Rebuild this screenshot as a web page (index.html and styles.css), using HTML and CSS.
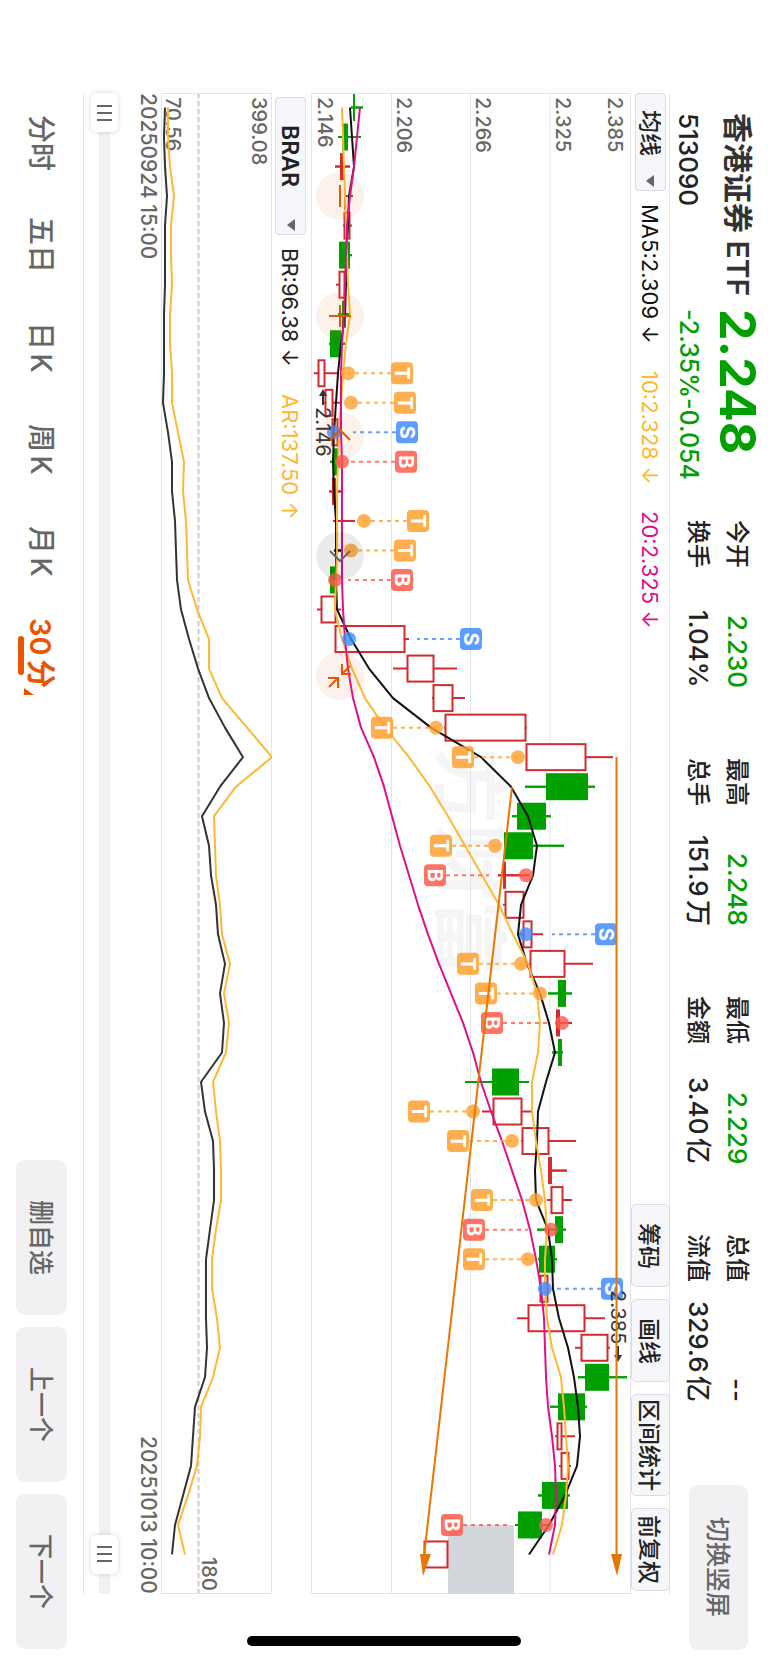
FILE: index.html
```html
<!DOCTYPE html>
<html lang="zh-CN">
<head>
    <meta charset="UTF-8">
    <meta name="viewport" content="width=device-width, initial-scale=1.0">
    <title>香港证券ETF 513090</title>
    <link rel="stylesheet" href="styles.css">
</head>
<body>
    <div class="app">
        <!-- Quote header -->
        <header class="header">
            <div class="quote">
                <h1 class="name">香港证券 ETF</h1>
                <strong class="price">2.248</strong>
                <span class="code">513090</span>
                <span class="change">-2.35%<span>-0.054</span></span>
            </div>
            <dl class="stats">
                <div><dt>今开</dt><dd class="down">2.230</dd></div>
                <div><dt>最高</dt><dd class="down">2.248</dd></div>
                <div><dt>最低</dt><dd class="down">2.229</dd></div>
                <div><dt>总值</dt><dd>--</dd></div>
                <div><dt>换手</dt><dd>1.04%</dd></div>
                <div><dt>总手</dt><dd>151.9万</dd></div>
                <div><dt>金额</dt><dd>3.40亿</dd></div>
                <div><dt>流值</dt><dd>329.6亿</dd></div>
            </dl>
            <button class="soft-btn rotate-btn">切换竖屏</button>
        </header>

        <main class="panel">
            <div class="toolbar">
                <div class="picker">
                    <select aria-label="主图指标"><option>均线</option></select>
                    <svg class="caret" viewBox="0 0 10 12"><path d="M9 0v12L1 6z"/></svg>
                </div>
                <span class="legend ma5">MA5:2.309 ↓</span>
                <span class="legend ma10">10:2.328 ↓</span>
                <span class="legend ma20">20:2.325 ↓</span>
                <div class="tools">
                    <button>筹码</button>
                    <button>画线</button>
                    <button>区间统计</button>
                    <button>前复权</button>
                </div>
            </div>

            <!-- Candles -->
            <div class="main-chart">
                <svg id="kline" viewBox="311 93 320 1501"></svg>
                <div class="float-tools">
                    <button aria-label="缩小"><svg viewBox="0 0 48 48"><path d="M24 13v22"/></svg></button>
                    <button aria-label="放大"><svg viewBox="0 0 48 48"><path d="M24 13v22M13 24h22"/></svg></button>
                    <button aria-label="左移"><svg viewBox="0 0 48 48"><path d="M14 28l10-10 10 10"/></svg></button>
                    <button aria-label="右移" class="muted"><svg viewBox="0 0 48 48"><path d="M14 19l10 10 10-10"/></svg></button>
                    <button aria-label="收起"><svg viewBox="0 0 48 48"><path d="M34 14l-8 8M26 12v10h9M13 35l9-9M12 26h10v10"/></svg></button>
                </div>
            </div>

            <div class="toolbar sub">
                <div class="picker wide">
                    <select aria-label="副图指标"><option>BRAR</option></select>
                    <svg class="caret" viewBox="0 0 10 12"><path d="M9 0v12L1 6z"/></svg>
                </div>
                <span class="legend br">BR:96.38 ↓</span>
                <span class="legend ma10">AR:137.50 ↑</span>
            </div>

            <div class="sub-chart">
                <svg id="brar" viewBox="161 93 111 1501"></svg>
            </div>

            <div class="dates">
                <time>20250924 15:00</time>
                <time>20251013 10:00</time>
            </div>

            <div class="range">
                <input type="range" aria-label="开始时间" min="0" max="500" value="0">
                <input type="range" aria-label="结束时间" min="0" max="500" value="493">
            </div>
        </main>

        <footer class="footer">
            <nav class="periods">
                <a href="#">分时</a>
                <a href="#">五日</a>
                <a href="#">日K</a>
                <a href="#">周K</a>
                <a href="#">月K</a>
                <a href="#" class="active">30分<svg viewBox="0 0 10 7"><path d="M0 0l10 7H0z"/></svg></a>
            </nav>
            <div class="actions">
                <button class="soft-btn">删自选</button>
                <button class="soft-btn">上一个</button>
                <button class="soft-btn">下一个</button>
            </div>
        </footer>

        <div class="home-bar"></div>
    </div>

    <script>
        const START = 107.5;
        const STEP = 29.53;
        const pos = i => START + i * STEP;

        // kind, body from, body to, low, high
        const candles = [
            ['g', 353, 355, 351, 363], ['g', 342, 348, 338, 361], ['r', 340, 344, 335, 350],
            ['r', 344, 345, 344, 353], ['h', 344, 350, 343, 352], ['g', 339, 350, 339, 352],
            ['h', 339, 345, 336, 345], ['g', 342, 346, 338, 349], ['g', 330, 341, 329, 345],
            ['h', 318, 325, 314, 339], ['h', 325, 333, 324, 340], ['h', 332, 338, 331, 340],
            ['g', 334, 338, 330, 340], ['r', 332, 336, 329, 341], ['r', 336, 337, 333, 355],
            ['k', 336, 337, 334, 342], ['g', 330, 335, 329, 337], ['h', 321, 336, 317, 341],
            ['h', 335, 405, 335, 409], ['h', 407, 434, 393, 457], ['h', 433, 453, 432, 465],
            ['h', 445, 526, 444, 527], ['h', 526, 586, 526, 613], ['g', 546, 588, 525, 595],
            ['g', 517, 546, 512, 551], ['g', 504, 533, 504, 564], ['r', 503, 506, 498, 530],
            ['h', 505, 524, 503, 524], ['h', 523, 532, 518, 543], ['h', 530, 565, 529, 593],
            ['g', 558, 566, 548, 572], ['r', 556, 560, 555, 572], ['g', 558, 562, 552, 563],
            ['g', 492, 519, 465, 529], ['h', 493, 522, 482, 532], ['h', 522, 549, 521, 576],
            ['r', 548, 552, 548, 567], ['h', 551, 563, 547, 572], ['g', 555, 563, 537, 566],
            ['g', 539, 555, 538, 557], ['h', 540, 548, 539, 549], ['h', 528, 585, 517, 605],
            ['h', 581, 608, 575, 610], ['g', 585, 609, 578, 627], ['g', 558, 585, 550, 587],
            ['h', 557, 562, 555, 575], ['h', 561, 569, 559, 571], ['g', 542, 568, 538, 570],
            ['g', 518, 542, 515, 550], ['h', 424, 448, 424, 448]
        ];

        const ma5 = [350, 352, 354, 349, 348, 346, 346, 345, 341, 338, 336, 334, 333, 334, 336, 336, 336, 337, 351, 369,
            393, 431, 481, 511, 528, 537, 533, 521, 518, 527, 540, 549, 555, 546, 538, 537, 535, 536, 548, 552,
            553, 559, 568, 574, 578, 580, 577, 565, 549, 529];
        const ma10 = [342, 343, 344, 345, 346, 347, 348, 350, 346, 343, 341, 339, 338, 337, 337, 337, 336, 335, 342, 352,
            365, 385, 409, 430, 448, 465, 482, 499, 513, 528, 537, 540, 538, 532, 532, 536, 541, 545, 547, 545,
            545, 547, 552, 561, 564, 566, 568, 566, 562, 553];
        const ma20 = [360, 357, 354, 350, 347, 346, 345, 344, 342, 341, 341, 341, 342, 342, 342, 342, 342, 343, 345, 348,
            353, 361, 374, 384, 392, 400, 409, 418, 428, 439, 451, 463, 473, 481, 491, 502, 512, 522, 530, 536,
            541, 544, 545, 546, 548, 552, 555, 556, 555, 549];

        const br = [165, 164, 165, 167, 165, 165, 165, 164, 164, 164, 163, 168, 172, 172, 175, 176, 177, 181, 189, 198,
            209, 225, 243, 220, 202, 209, 211, 216, 218, 225, 220, 224, 222, 201, 205, 213, 214, 214, 210, 206,
            206, 206, 207, 205, 195, 193, 191, 183, 175, 172];
        const ar = [168, 168, 170, 174, 171, 171, 172, 170, 170, 172, 172, 178, 184, 183, 186, 187, 188, 197, 209, 209,
            222, 247, 272, 236, 214, 215, 216, 220, 222, 230, 224, 229, 226, 213, 216, 220, 221, 221, 216, 212,
            212, 217, 220, 213, 201, 200, 197, 188, 178, 185];

        // index, letter, dot, badge, where the dashes start
        const marks = [
            [9, 'T', 348, 402, 348], [10, 'T', 351, 405, 351], [11, 'S', 334, 407, 353], [12, 'B', 342, 406, 347],
            [14, 'T', 364, 418, 364], [15, 'T', 351, 405, 351], [16, 'B', 335, 402, 348], [18, 'S', 349, 471, 417],
            [21, 'T', 436, 382, 436], [22, 'T', 518, 463, 518], [25, 'T', 495, 441, 495], [26, 'B', 526, 435, 489],
            [28, 'S', 526, 606, 552], [29, 'T', 521, 468, 521], [30, 'T', 540, 486, 540], [31, 'B', 562, 492, 547],
            [34, 'T', 473, 419, 473], [35, 'T', 512, 458, 512], [37, 'T', 536, 482, 536], [38, 'B', 551, 474, 528],
            [39, 'T', 528, 474, 528], [40, 'S', 545, 612, 557], [48, 'B', 546, 452, 507]
        ];

        function line(values, cls) {
            const points = values.map((v, i) => `${v},${pos(i)}`).join(' ');
            return `<polyline class="line ${cls}" points="${points}"/>`;
        }

        function label(x, y, text, cls = 'axis') {
            return `<text class="${cls}" transform="translate(${x} ${y}) rotate(90)">${text}</text>`;
        }

        function candle([kind, from, to, low, high], i) {
            const y = pos(i);
            const body = kind === 'h'
                ? `<rect x="${from + .5}" y="${y - 13}" width="${to - from - 1}" height="26"/>`
                : `<rect x="${from}" y="${y - 13.5}" width="${to - from}" height="27"/>`;
            return `<g class="candle ${kind}"><path d="M${low} ${y}H${from}M${to} ${y}H${high}"/>${body}` +
                (kind === 'h' ? '' : `<path d="M${low} ${y}H${high}"/>`) + '</g>';
        }

        function mark([i, letter, dot, badge, from]) {
            const y = pos(i);
            const end = badge > dot ? badge - 11 : badge + 11;
            return `<g class="mark ${letter}"><path d="M${end} ${y}H${from}"/>` +
                `<circle cx="${dot}" cy="${y}" r="7"/>` +
                `<rect x="${badge - 11}" y="${y - 11}" width="22" height="22" rx="4"/>` +
                label(badge - 7, y, letter, 'letter') + '</g>';
        }

        document.getElementById('kline').innerHTML =
            label(442, 748, '方财富', 'watermark') +
            '<path class="grid" d="M391.5 93V1594M470.5 93V1594M550 93V1594"/>' +
            '<path class="frame" d="M311.5 93.5H630.5V1593.5H311.5z"/>' +
            '<rect class="gap" x="448" y="1525" width="66" height="69"/>' +
            label(318, 97, '2.146') + label(397, 97, '2.206') + label(476, 97, '2.266') +
            label(556, 97, '2.325') + label(608, 97, '2.385') +
            candles.map(candle).join('') +
            line(ma5, 'c5') + line(ma10, 'c10') + line(ma20, 'c20') +
            marks.map(mark).join('') +
            label(316, 407, '2.146', 'extreme') +
            '<path class="pointer" d="M323 405V393"/><path class="tip" d="M319 396l4-7 4 7z"/>' +
            label(611, 1290, '2.385', 'extreme') +
            '<path class="pointer" d="M618 1346V1358"/><path class="tip" d="M614 1355l4 7 4-7z"/>' +
            '<g class="ray"><path d="M616.5 757V1556M512 787L424 1556"/>' +
            '<path class="head" d="M611 1554h11l-5 22zM420 1554h11l-8 22z"/></g>';

        document.getElementById('brar').innerHTML =
            '<path class="dash" d="M198.5 93V1594"/>' +
            '<path class="frame" d="M161.5 93.5H271.5V1593.5H161.5z"/>' +
            label(166, 97, '70.56') + label(252, 97, '399.08') + label(202, 1557, '180') +
            line(ar, 'c10') + line(br, 'cbr');
    </script>
</body>
</html>
```
FILE: styles.css
```css
* {
    box-sizing: border-box;
}
html {
    writing-mode: vertical-rl;
    text-orientation: sideways;
}
body {
    margin: 0;
    background-color: white;
    color: #222;
    font-family: Inter, 'Noto Sans CJK SC', sans-serif;
    font-size: 24px;
    line-height: 1;
}
.app {
    position: relative;
    display: flex;
    flex-direction: column;
    width: 100vw;
    height: 100vh;
    white-space: nowrap;
}
button, select {
    font: inherit;
    color: inherit;
    writing-mode: vertical-rl;
    text-orientation: sideways;
    margin: 0;
    padding: 0;
    border: none;
    cursor: pointer;
}
.soft-btn {
    height: 155px;
    padding-right: 3px;
    border-radius: 9px;
    background-color: #f1f1f4;
    color: #666;
    font-size: 25px;
    font-weight: 500;
}

/* Header */
.header {
    display: flex;
    flex: none;
    width: 98px;
    padding-top: 113px;
    padding-bottom: 13px;
    font-weight: 500;
}
.quote {
    display: grid;
    grid-template-columns: 196px 211px;
    grid-template-rows: 61px 37px;
    align-items: center;
}
.name {
    margin: 0;
    color: #333;
    font-size: 30px;
    font-weight: 600;
    text-autospace: normal;
}
.price {
    color: #00a000;
    font-size: 50px;
    font-weight: 700;
}
.code, .change {
    padding-right: 1px;
    font-size: 26px;
}
.change {
    display: flex;
    color: #00a000;
    font-size: 25px;
}
.stats {
    flex: 1;
    display: grid;
    grid-template-columns: repeat(4, 1fr);
    grid-template-rows: 39px 39px;
    column-gap: 70px;
    margin: 0 12px 0 0;
}
.stats div {
    display: flex;
    justify-content: space-between;
    align-items: center;
}
.stats dd {
    margin: 0;
    font-size: 26px;
    text-autospace: normal;
}
.down {
    color: #00a000;
}
.rotate-btn {
    width: 59px;
    height: 165px;
    margin: 83px 20px 0 0;
}

/* Chart area */
.panel {
    flex: 1;
    display: flex;
    flex-direction: column;
    min-width: 0;
    margin-top: 93px;
    margin-bottom: 69px;
    border-right: 1px solid #e4e5ec;
    border-left: 1px solid #e4e5ec;
}
.toolbar {
    display: flex;
    align-items: center;
    flex: none;
    width: 38px;
    font-size: 22px;
}
.toolbar.sub {
    width: 39px;
    padding-top: 4px;
    padding-right: 2px;
}
.picker {
    display: flex;
    align-items: center;
    width: 31px;
    height: 98px;
    padding: 0 0 3px;
    border: 1px solid #dcdde4;
    border-radius: 4px;
    background-color: #f6f7fa;
}
.picker select {
    appearance: none;
    flex: 1;
    min-height: 0;
    padding-top: 16px;
    padding-right: 2px;
    background: transparent;
    font-weight: 500;
    font-size: 23px;
    outline: none;
}
.picker.wide {
    height: 138px;
}
.picker.wide select {
    padding-top: 27px;
    font-weight: 600;
}
.caret {
    flex: none;
    width: 10px;
    height: 12px;
    fill: #666;
    pointer-events: none;
}
.legend {
    margin-top: 13px;
    padding-right: 1px;
}
.legend + .legend {
    margin-top: 27px;
}
.ma5 {
    color: #111;
}
.ma10 {
    color: #fdb933;
}
.ma20 {
    color: #e0108a;
}
.br {
    color: #222;
}
.tools {
    display: flex;
    gap: 12px;
    margin-top: auto;
    margin-bottom: 3px;
}
.tools button {
    width: 39px;
    min-height: 83px;
    padding: 4px 3px 4px 0;
    border: 1px solid #dcdde4;
    border-radius: 5px;
    background-color: #f6f7fa;
    font-size: 23px;
    font-weight: 500;
}
.main-chart {
    position: relative;
    flex: 320;
    min-width: 0;
}
.sub-chart {
    flex: 111;
    min-width: 0;
}
.main-chart > svg, .sub-chart > svg {
    display: block;
    width: 100%;
    height: 100%;
}
.float-tools {
    position: absolute;
    top: 79px;
    left: 5px;
    display: flex;
    gap: 72px;
}
.float-tools button {
    width: 48px;
    height: 48px;
    border-radius: 50%;
    background-color: rgba(234, 85, 4, 0.08);
}
.float-tools svg {
    display: block;
    width: 48px;
    height: 48px;
    fill: none;
    stroke: #ea5504;
    stroke-width: 2;
}
.float-tools .muted {
    background-color: rgba(0, 0, 0, 0.08);
}
.float-tools .muted svg {
    stroke: #666;
}

/* Chart drawing */
svg text {
    writing-mode: horizontal-tb;
}
.grid, .frame {
    fill: none;
    stroke: #e2e4ec;
}
.dash {
    stroke: #ccc;
    stroke-width: 2;
    stroke-dasharray: 5 3;
}
.gap {
    fill: #d3d6db;
}
.axis {
    fill: #666;
    font-size: 20px;
    font-weight: 500;
}
.extreme {
    fill: #333;
    font-size: 20px;
}
.pointer {
    stroke: #333;
    stroke-width: 2;
}
.tip {
    fill: #333;
}
.watermark {
    fill: #f5f5f5;
    font-size: 76px;
    font-weight: 700;
}
.line {
    fill: none;
    stroke-width: 2;
    stroke-linejoin: round;
}
.c5 {
    stroke: #111;
}
.c10 {
    stroke: #fdb933;
}
.c20 {
    stroke: #e0108a;
}
.cbr {
    stroke: #333;
}
.candle {
    fill: #d22b2f;
    stroke: #d22b2f;
    stroke-width: 2;
}
.candle rect {
    stroke: none;
}
.candle.g {
    fill: #00a000;
    stroke: #00a000;
}
.candle.k {
    fill: #111;
    stroke: #111;
}
.candle.h rect {
    fill: white;
    stroke: #d22b2f;
}
.mark path {
    stroke-width: 2;
    stroke-dasharray: 4 4;
}
.mark circle, .mark path {
    opacity: 0.8;
}
.mark rect {
    opacity: 0.85;
}
.T {
    fill: #ffa02e;
    stroke: #ffa02e;
}
.B {
    fill: #ff5a4b;
    stroke: #ff5a4b;
}
.S {
    fill: #408cff;
    stroke: #408cff;
}
.mark rect, .mark circle, .mark text {
    stroke: none;
}
.letter {
    fill: white;
    font-size: 20px;
    font-weight: 700;
    text-anchor: middle;
}
.ray {
    fill: none;
    stroke: #e67700;
    stroke-width: 2;
}
.ray .head {
    fill: #e67700;
    stroke: none;
}

/* Dates and range slider */
.dates {
    display: flex;
    justify-content: space-between;
    align-items: center;
    flex: none;
    width: 26px;
    color: #666;
    font-size: 21px;
    font-weight: 500;
}
.range {
    flex: none;
    display: grid;
    width: 51px;
    padding-right: 17px;
    padding-left: 7px;
}
.range input {
    grid-area: 1 / 1;
    appearance: none;
    writing-mode: vertical-lr;
    width: 27px;
    height: 100%;
    margin: 0;
    background: transparent;
    pointer-events: none;
}
.range input:first-child {
    background: linear-gradient(#f1f1f4, #f1f1f4) center / 11px 100% no-repeat;
    border-radius: 6px;
}
.range input::-webkit-slider-thumb {
    appearance: none;
    width: 27px;
    height: 39px;
    border-radius: 5px;
    background: repeating-linear-gradient(#666 0 2px, transparent 2px 7px) center / 15px 16px no-repeat, white;
    box-shadow: 0 0 5px rgba(0, 0, 0, 0.18);
    pointer-events: auto;
}

/* Bottom bar */
.footer {
    flex: none;
    display: flex;
    justify-content: space-between;
    align-items: center;
    width: 83px;
    padding-top: 92px;
    padding-bottom: 14px;
}
.periods {
    display: flex;
}
.periods a {
    position: relative;
    display: flex;
    align-items: center;
    justify-content: center;
    height: 102px;
    padding-right: 2px;
    color: #666;
    font-size: 28px;
    font-weight: 500;
    text-decoration: none;
    text-autospace: normal;
}
.periods .active {
    color: #ea5504;
    font-size: 29px;
    font-weight: 600;
}
.periods .active::after {
    content: '';
    position: absolute;
    top: 34px;
    left: -8px;
    width: 6px;
    height: 39px;
    border-radius: 3px;
    background-color: #ea5504;
}
.periods svg {
    position: absolute;
    bottom: 9px;
    left: -2px;
    width: 10px;
    height: 7px;
    fill: #ea5504;
}
.actions {
    display: flex;
    gap: 12px;
}
.actions .soft-btn {
    width: 51px;
}
.home-bar {
    position: absolute;
    bottom: 17px;
    left: 247px;
    width: 274px;
    height: 10px;
    border-radius: 5px;
    background-color: black;
}
```
